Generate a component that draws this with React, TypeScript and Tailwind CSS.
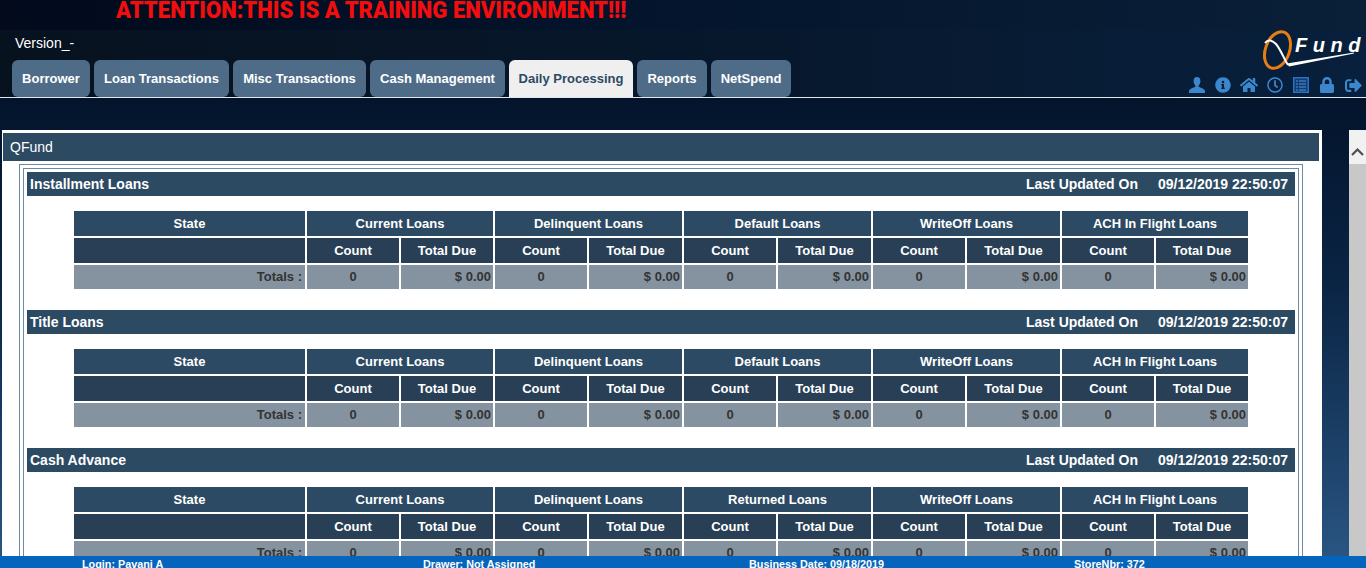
import { FaInfoCircle, FaHome, FaRegClock, FaLock, FaSignOutAlt } from "react-icons/fa";

const tabs = [
  { label: "Borrower", width: "w-[78px]" },
  { label: "Loan Transactions", width: "w-[135px]" },
  { label: "Misc Transactions", width: "w-[133px]" },
  { label: "Cash Management", width: "w-[135px]" },
  { label: "Daily Processing", width: "w-[124px]" },
  { label: "Reports", width: "w-[70px]" },
  { label: "NetSpend", width: "w-[80px]" },
];

const sections = [
  { title: "Installment Loans", third: "Default Loans" },
  { title: "Title Loans", third: "Default Loans" },
  { title: "Cash Advance", third: "Returned Loans" },
];

const colWidths = ["w-[231px]", "w-[92px]", "w-[92px]", "w-[92px]", "w-[93px]", "w-[92px]", "w-[93px]", "w-[92px]", "w-[93px]", "w-[92px]", "w-[92px]"];

function Logo() {
  return (
    <svg width="100" height="40" viewBox="0 0 100 40" className="block">
      <ellipse cx="15.500" cy="20" rx="12" ry="19" transform="rotate(20 15.500 20)" fill="none" stroke="#e67e14" strokeWidth="3" />
      <path d="M3 13 C6 9 10 10 14 14 C19 20 22 29 26 35" fill="none" stroke="#fff" strokeWidth="2" />
      <path d="M25 33.500 L92 22.500 L92 23.500 L27 36.500 Z" fill="#fff" />
      <text x="33" y="22" fill="#fff" fontSize="20" fontStyle="italic" fontWeight="700" letterSpacing="5.500" fontFamily="'Liberation Sans', sans-serif">
        Fund
      </text>
    </svg>
  );
}

function UserIcon() {
  return (
    <svg width="16" height="16" viewBox="0 0 16 16" className="block" fill="#3c86cc">
      <path d="M8 0c2.200 0 3.400 1.700 3.400 3.900 0 1.900-.8 3.600-1.800 4.500v1.400c1.800.8 5.400 1.700 6.400 4.200v2H0v-2c1-2.500 4.600-3.400 6.400-4.200V8.400C5.400 7.500 4.600 5.800 4.600 3.900 4.600 1.700 5.800 0 8 0z" />
    </svg>
  );
}

function ListIcon() {
  return (
    <svg width="16" height="16" viewBox="0 0 16 16" fill="none" className="block">
      <rect x="0.750" y="0.750" width="14.500" height="14.500" stroke="#2a72c0" strokeWidth="1.500" fill="#123c70" />
      <path d="M3 4h2M6 4h7M3 7h2M6 7h7M3 10h2M6 10h7M3 13h2M6 13h7" stroke="#4a94dc" strokeWidth="1" />
    </svg>
  );
}

function LoanTable({ third }: { third: string }) {
  const groups = ["Current Loans", "Delinquent Loans", third, "WriteOff Loans", "ACH In Flight Loans"];
  const th = "bg-[#2c4a63] text-white font-bold text-center p-0 pt-[1px] h-[25px]";
  const sub = "bg-[#283f56] text-white font-bold text-center p-0 pt-[1px] h-[25px]";
  const td = "bg-[#8593a0] text-[#333333] font-bold p-0 h-[24px]";
  return (
    <table className="border-separate border-spacing-[2px] table-fixed w-[1178px] mt-[13px] ml-[45px] text-[13px]">
      <colgroup>
        {colWidths.map((w, i) => (
          <col key={i} className={w} />
        ))}
      </colgroup>
      <tbody>
        <tr>
          <th className={th}>State</th>
          {groups.map((g) => (
            <th key={g} colSpan={2} className={th}>{g}</th>
          ))}
        </tr>
        <tr>
          <th className={sub}></th>
          {groups.flatMap((g) => [
            <th key={g + "c"} className={sub}>Count</th>,
            <th key={g + "t"} className={sub}>Total Due</th>,
          ])}
        </tr>
        <tr>
          <td className={`${td} text-right pr-[3px]`}>Totals :</td>
          {groups.flatMap((g) => [
            <td key={g + "c"} className={`${td} text-center`}>0</td>,
            <td key={g + "t"} className={`${td} text-right pr-[2px]`}>$ 0.00</td>,
          ])}
        </tr>
      </tbody>
    </table>
  );
}

export default function App() {
  return (
    <div className="h-[568px] w-[1366px] overflow-hidden flex flex-col font-['Liberation_Sans',Arial,sans-serif] bg-gradient-to-b from-[#020c20] via-[#0a2444] to-[#2b5785]">
      {/* top banner */}
      <div className="h-[30px] shrink-0 pl-[116px] bg-gradient-to-r from-[#020a1c] via-[#04152d] to-[#0a2038] overflow-hidden">
        <span className="block origin-left scale-x-[0.92] whitespace-nowrap font-['Roboto',sans-serif] font-black text-[24px] leading-[20px] text-[#f40d0d]">
          ATTENTION:THIS IS A TRAINING ENVIRONMENT!!!
        </span>
      </div>

      {/* header + nav */}
      <div className="h-[68px] shrink-0 bg-gradient-to-r from-[#07121f] via-[#07172b] to-[#08203d] border-b border-[#dfe6ec] flex justify-between">
        <div className="flex flex-col pl-[12px]">
          <div className="text-white text-[14px] leading-[16px] pt-[5px] pl-[3px] h-[30px]">Version_-</div>
          <div className="flex gap-[4px]">
            {tabs.map((t) => (
              <div
                key={t.label}
                className={`${t.width} h-[37px] rounded-[6px] flex items-center justify-center text-[13px] font-bold ${
                  t.label === "Daily Processing" ? "bg-[#efefef] text-[#2c4a63] rounded-b-none" : "bg-[#4e6c87] text-white"
                }`}
              >
                {t.label}
              </div>
            ))}
          </div>
        </div>
        <div className="flex flex-col items-end pr-[4px]">
          <Logo />
          <div className="flex items-center gap-[10px] mt-[6px] text-[#3c86cc] text-[16px]">
            <UserIcon />
            <FaInfoCircle />
            <FaHome className="text-[18px] -mx-[1px]" />
            <FaRegClock />
            <ListIcon />
            <FaLock />
            <FaSignOutAlt className="text-[17px]" />
          </div>
        </div>
      </div>

      {/* body */}
      <div className="flex-1 min-h-0 flex pt-[32px] pl-[2px]">
        <div className="w-[1320px] shrink-0 bg-white pt-[3px] pl-[1px] overflow-hidden self-stretch">
          <div className="w-[1316px] h-[28px] bg-[#2d4a63] text-white text-[14px] leading-[28px] pl-[7px]">QFund</div>
          <div className="ml-[16px] mt-[3px] w-[1284px] border border-[#6b8aa3] border-b-0 px-[3px] pt-[3px]">
            <div className="border border-[#6b8aa3] border-b-0 pt-[3px] px-[3px]">
              {sections.map((s) => (
                <div key={s.title} className="h-[138px]">
                  <div className="h-[24px] w-[1268px] bg-[#2d4a63] text-white font-bold text-[14px] leading-[24px] px-[3px] flex justify-between">
                    <span>{s.title}</span>
                    <span className="flex gap-[20px] pr-[4px]">
                      <span>Last Updated On</span>
                      <span>09/12/2019 22:50:07</span>
                    </span>
                  </div>
                  <LoanTable third={s.third} />
                </div>
              ))}
            </div>
          </div>
        </div>
        <div className="ml-[27px] w-[17px] bg-[#c8c8c8] shrink-0 flex flex-col">
          <div className="h-[34px] bg-[#f1f1f1] flex items-center justify-center pt-[9px]">
            <svg width="13" height="8" viewBox="0 0 13 8" fill="none">
              <path d="M1 7 L6.500 1.500 L12 7" stroke="#505050" strokeWidth="2.200" />
            </svg>
          </div>
        </div>
      </div>

      {/* status bar */}
      <div className="h-[12px] shrink-0 bg-[#0565bd] overflow-hidden text-white font-bold text-[10.8px] leading-[17px] flex">
        <span className="pl-[82px] w-[423px]">Login: Pavani A</span>
        <span className="w-[326px]">Drawer: Not Assigned</span>
        <span className="w-[325px]">Business Date: 09/18/2019</span>
        <span>StoreNbr: 372</span>
      </div>
    </div>
  );
}
